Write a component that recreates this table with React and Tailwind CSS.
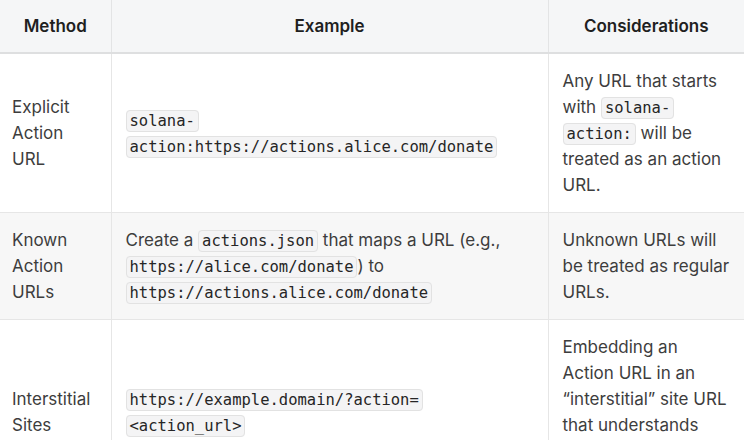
function Code({ children }) {
  return (
    <code className="rounded-[4px] border border-[#e2e2e2] bg-[#f4f4f5] px-[3px] py-[1px] font-['DejaVu_Sans_Mono',monospace] text-[15.5px] leading-[18px] text-[#262626] [box-decoration-break:clone]">
      {children}
    </code>
  );
}

const rows = [
  {
    method: "Explicit Action URL",
    example: (
      <>
        <Code>solana-action:https://actions.alice.com/donate</Code>
      </>
    ),
    notes: (
      <>
        Any URL that starts with <Code>solana-action:</Code> will be treated as an action URL.
      </>
    ),
    bg: "bg-white",
  },
  {
    method: "Known Action URLs",
    example: (
      <>
        Create a <Code>actions.json</Code> that maps a URL (e.g., <Code>https://alice.com/donate</Code>) to{" "}
        <Code>https://actions.alice.com/donate</Code>
      </>
    ),
    notes: <>Unknown URLs will be treated as regular URLs.</>,
    bg: "bg-[#f7f7f7]",
  },
  {
    method: "Interstitial Sites",
    example: (
      <>
        <Code>
          https://example.domain/?action=
          <br />
          &lt;action_url&gt;
        </Code>
      </>
    ),
    notes: <>Embedding an Action URL in an “interstitial” site URL that understands how to parse Actions.</>,
    bg: "bg-white",
  },
];

export default function App() {
  return (
    <div className="h-[440px] w-[744px] overflow-hidden bg-white font-['Inter',sans-serif] text-[17px] leading-[26px] text-[#3d3d3d]">
      <table className="w-[744px] table-fixed border-collapse">
        <colgroup>
          <col className="w-[111px]" />
          <col className="w-[437px]" />
          <col className="w-[196px]" />
        </colgroup>
        <thead>
          <tr className="h-[53px] border-b-2 border-[#dedfe0] bg-[#f5f6f7]">
            <th className="border-r border-[#e3e4e5] px-[12px] text-center font-semibold text-[#1f1f1f]">Method</th>
            <th className="border-r border-[#e3e4e5] px-[12px] text-center font-semibold text-[#1f1f1f]">Example</th>
            <th className="px-[12px] text-center font-semibold text-[#1f1f1f]">Considerations</th>
          </tr>
        </thead>
        <tbody>
          {rows.map((r) => (
            <tr key={r.method} className={`${r.bg} border-b border-[#e6e6e6]`}>
              <td className="border-r border-[#e6e6e6] px-[12px] py-[14px] align-middle">{r.method}</td>
              <td className="border-r border-[#e6e6e6] px-[14px] py-[14px] align-middle">{r.example}</td>
              <td className="px-[14px] py-[14px] align-middle">{r.notes}</td>
            </tr>
          ))}
        </tbody>
      </table>
    </div>
  );
}
